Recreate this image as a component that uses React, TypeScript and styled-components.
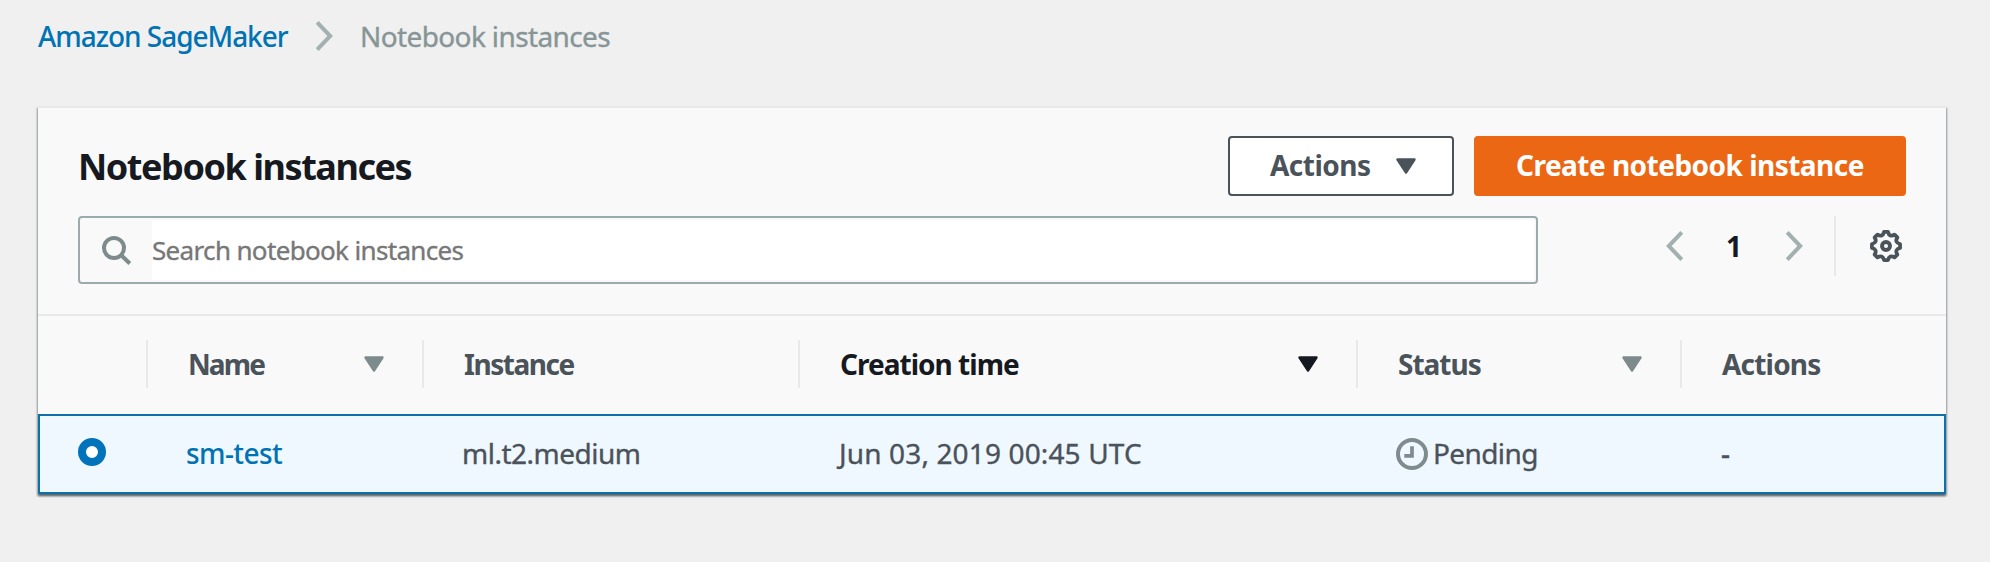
import React from 'react';
import styled, { createGlobalStyle, css } from 'styled-components';

const GlobalStyle = createGlobalStyle`
  * { box-sizing: border-box; }
  body {
    margin: 0;
    background: #f0f0f0;
    font-family: "Noto Sans", "Open Sans", sans-serif;
    font-size: 28px;
    line-height: 36px;
    color: #4a525a;
    white-space: nowrap;
  }
`;

const bookWeight = css`
  font-weight: 400;
  -webkit-text-stroke: 0.35px currentColor;
`;

const Page = styled.main`
  width: 1990px;
  height: 562px;
  padding: 18px 44px 0 38px;
  overflow: hidden;
`;

const Breadcrumbs = styled.nav`
  display: flex;
  align-items: center;
  height: 36px;
`;

const CrumbLink = styled.a`
  width: 277px;
  color: #0073b4;
  font-weight: 500;
  letter-spacing: -1.05px;
`;

const CurrentCrumb = styled.span`
  ${bookWeight}
  margin-left: 27px;
  color: #879596;
  letter-spacing: -0.62px;
`;

const Panel = styled.section`
  margin-top: 52px;
  border-top: 2px solid #e8e9e9;
  background: #f9f9f9;
  box-shadow: 0 2px 2px rgba(0, 28, 36, 0.3), 1px 2px 2px rgba(0, 28, 36, 0.3),
    -1px 2px 2px rgba(0, 28, 36, 0.3);
`;

const PanelHeader = styled.header`
  height: 208px;
  padding: 28px 40px 0;
  border-bottom: 2px solid #e8e9e9;
`;

const TitleBar = styled.div`
  display: flex;
  align-items: center;
  gap: 20px;
  height: 60px;
`;

const Title = styled.h2`
  flex: 1;
  margin: 0;
  padding-top: 2px;
  font-size: 36px;
  line-height: 48px;
  font-weight: 700;
  letter-spacing: -1.45px;
  color: #16191f;
`;

const Button = styled.button<{ $primary?: boolean }>`
  display: flex;
  align-items: center;
  justify-content: space-between;
  width: ${p => (p.$primary ? '432px' : '226px')};
  height: 60px;
  padding: ${p => (p.$primary ? '0 37px 2px 40px' : '0 36px 2px 40px')};
  border: 2px solid ${p => (p.$primary ? '#eb6714' : '#4a525a')};
  border-radius: 4px;
  background: ${p => (p.$primary ? '#eb6714' : '#fff')};
  color: ${p => (p.$primary ? '#fff' : '#4a525a')};
  font: inherit;
  font-weight: 700;
  letter-spacing: -0.52px;
  svg {
    margin-top: 2px;
  }
`;

const FilterBar = styled.div`
  display: flex;
  justify-content: space-between;
  margin-top: 20px;
`;

const SearchBox = styled.label`
  display: flex;
  align-items: center;
  width: 1460px;
  height: 68px;
  padding: 2px;
  border: 2px solid #9baaaa;
  border-radius: 4px;
`;

const SearchIconSlot = styled.span`
  display: flex;
  width: 70px;
  padding-left: 18px;
`;

const SearchInput = styled.input`
  flex: 1;
  height: 60px;
  padding: 0;
  border: 0;
  outline: 0;
  background: #fff;
  font: inherit;
  font-size: 26px;
  letter-spacing: -0.66px;
  ${bookWeight}
  &::placeholder {
    color: #777;
    -webkit-text-stroke: 0.35px #777;
    opacity: 1;
  }
`;

const Preferences = styled.div`
  display: flex;
  align-items: center;
  height: 60px;
  padding-right: 4px;
`;

const PageNumber = styled.b`
  width: 101px;
  padding: 0 1px 1px 0;
  text-align: center;
  color: #16191f;
`;

const Separator = styled.span`
  width: 2px;
  height: 60px;
  margin: 0 34px 0 31px;
  background: #e8e9e9;
`;

const Grid = styled.div`
  display: grid;
  grid-template-columns: 108px 276px 376px 558px 324px 266px;
`;

const HeadRow = styled(Grid)`
  height: 98px;
  padding: 24px 0 26px;
`;

const HeadCell = styled.div<{ $active?: boolean; $spacing?: string }>`
  display: flex;
  align-items: center;
  justify-content: space-between;
  padding: 0 38px 0 40px;
  border-left: 2px solid #e8e9e9;
  font-weight: 700;
  letter-spacing: ${p => p.$spacing ?? '-0.6px'};
  color: ${p => (p.$active ? '#16191f' : '#4a525a')};
`;

const BodyRow = styled(Grid)`
  height: 80px;
  align-items: center;
  padding-bottom: 2px;
  background: #f0f8ff;
  box-shadow: inset 0 0 0 2px #0f6fa8;
`;

const Cell = styled.div<{ $spacing?: string }>`
  ${bookWeight}
  display: flex;
  align-items: center;
  padding-left: 40px;
  letter-spacing: ${p => p.$spacing ?? '0'};
`;

const InstanceLink = styled.a`
  color: #0073b4;
  font-weight: 500;
  -webkit-text-stroke: 0;
`;

const CreatedAt = styled.time`
  margin-left: 1px;
`;

const Radio = styled.span`
  width: 28px;
  height: 28px;
  margin-bottom: 2px;
  border: 8px solid #0073bb;
  border-radius: 50%;
  background: #fff;
`;

const StatusLabel = styled.span`
  margin-left: 5px;
`;

const StatusCell = styled(Cell)`
  svg {
    margin-top: 2px;
  }
`;

const EmptyMark = styled.span`
  font-weight: 500;
  margin-left: 1px;
`;

const Chevron = ({ back }: { back?: boolean }) => (
  <svg width="18" height="32" viewBox="0 0 18 32" fill="none" stroke="#a3b0b0" strokeWidth="4">
    <path d={back ? 'M15.8 2.4 2.8 16l13 13.6' : 'M2.2 2.4 15.2 16l-13 13.6'} />
  </svg>
);

const Caret = ({ color }: { color: string }) => (
  <svg width="20" height="16" viewBox="0 0 20 16">
    <path d="M1.5 1.5h17L10 14.6z" fill={color} stroke={color} strokeWidth="2.4" strokeLinejoin="round" />
  </svg>
);

const SearchIcon = () => (
  <svg width="32" height="32" viewBox="0 0 32 32" fill="none" stroke="#7d8b8c" strokeWidth="4">
    <circle cx="14" cy="14" r="10" />
    <path d="m20.5 20.5 9.3 9" />
  </svg>
);

const ClockIcon = () => (
  <svg width="32" height="32" viewBox="0 0 32 32" fill="none" stroke="#7f8c8d">
    <circle cx="16" cy="16" r="14" strokeWidth="4" />
    <path d="M16 8.3v9.5H8.3" strokeWidth="3.7" />
  </svg>
);

const polar = (radius: number, degrees: number) => {
  const a = (degrees * Math.PI) / 180;
  return `${(16 + radius * Math.cos(a)).toFixed(2)} ${(16 + radius * Math.sin(a)).toFixed(2)}`;
};

const gearOutline =
  `M${polar(14.2, -8)}` +
  Array.from({ length: 8 }, (_, i) => {
    const a = i * 45;
    return `L${polar(14.2, a + 8)}Q${polar(9, a + 22.5)} ${polar(14.2, a + 37)}`;
  }).join('') +
  'Z';

const GearIcon = () => (
  <svg width="32" height="32" viewBox="0 0 32 32" fill="none" stroke="#4a525a">
    <path d={gearOutline} strokeWidth="3.8" strokeLinejoin="round" />
    <circle cx="16" cy="16" r="4" strokeWidth="3.9" />
  </svg>
);

export default function App() {
  return (
    <Page>
      <GlobalStyle />
      <Breadcrumbs>
        <CrumbLink>Amazon SageMaker</CrumbLink>
        <Chevron />
        <CurrentCrumb>Notebook instances</CurrentCrumb>
      </Breadcrumbs>
      <Panel>
        <PanelHeader>
          <TitleBar>
            <Title>Notebook instances</Title>
            <Button>
              Actions <Caret color="#4a525a" />
            </Button>
            <Button $primary>Create notebook instance</Button>
          </TitleBar>
          <FilterBar>
            <SearchBox>
              <SearchIconSlot>
                <SearchIcon />
              </SearchIconSlot>
              <SearchInput placeholder="Search notebook instances" />
            </SearchBox>
            <Preferences>
              <Chevron back />
              <PageNumber>1</PageNumber>
              <Chevron />
              <Separator />
              <GearIcon />
            </Preferences>
          </FilterBar>
        </PanelHeader>
        <HeadRow>
          <span />
          <HeadCell $spacing="-1.9px">
            Name <Caret color="#7d8b8c" />
          </HeadCell>
          <HeadCell $spacing="-1.45px">Instance</HeadCell>
          <HeadCell $active $spacing="-0.98px">
            Creation time <Caret color="#16191f" />
          </HeadCell>
          <HeadCell $spacing="-1px">
            Status <Caret color="#7d8b8c" />
          </HeadCell>
          <HeadCell $spacing="-0.8px">Actions</HeadCell>
        </HeadRow>
        <BodyRow>
          <Cell>
            <Radio />
          </Cell>
          <Cell $spacing="-0.6px">
            <InstanceLink>sm-test</InstanceLink>
          </Cell>
          <Cell $spacing="-0.5px">ml.t2.medium</Cell>
          <Cell $spacing="0.14px">
            <CreatedAt>Jun 03, 2019 00:45 UTC</CreatedAt>
          </Cell>
          <StatusCell $spacing="-0.6px">
            <ClockIcon />
            <StatusLabel>Pending</StatusLabel>
          </StatusCell>
          <Cell>
            <EmptyMark>-</EmptyMark>
          </Cell>
        </BodyRow>
      </Panel>
    </Page>
  );
}
